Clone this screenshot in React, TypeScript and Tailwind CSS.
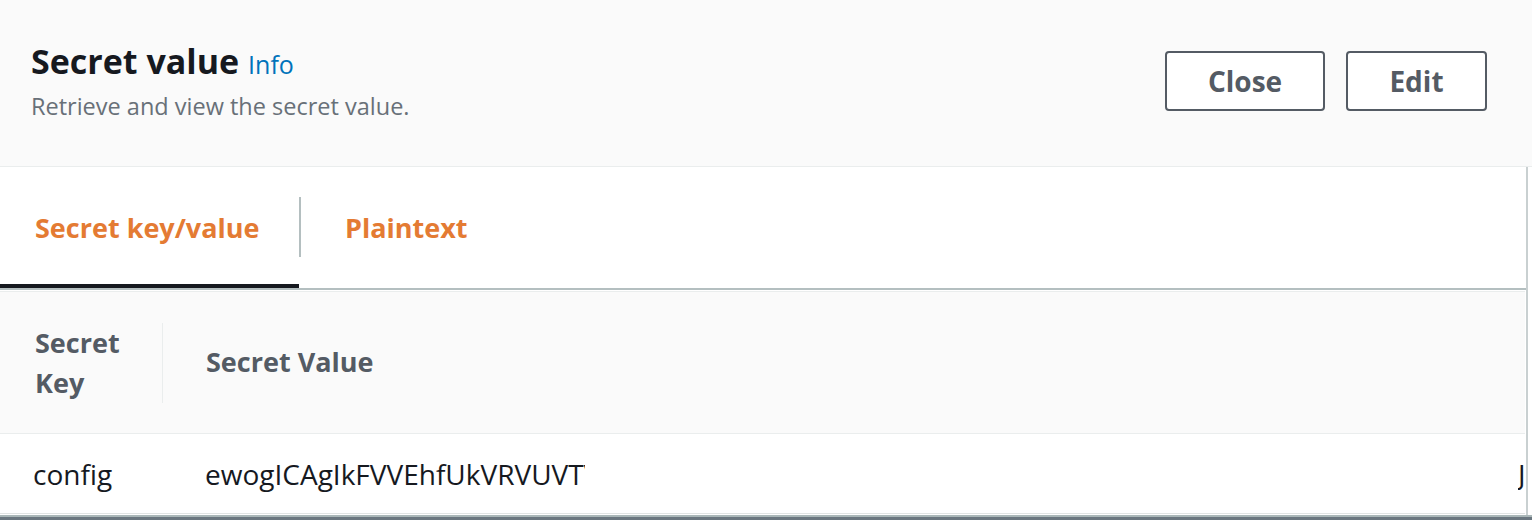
export default function App() {
  return (
    <div
      className="w-[1532px] h-[520px] overflow-hidden bg-white flex flex-col"
      style={{ fontFamily: '"Open Sans", "Liberation Sans", sans-serif' }}
    >
      {/* Header */}
      <div className="h-[167px] shrink-0 bg-[#fafafa] border-b border-[#eaeded] flex items-start justify-between pl-[31px] pr-[45px]">
        <div className="pt-[40px]">
          <div className="flex items-baseline gap-[9px] leading-[43px]">
            <h1 className="text-[34px] font-bold text-[#16191f]">Secret value</h1>
            <a className="text-[25px] text-[#0073bb]">Info</a>
          </div>
          <p className="mt-[6px] text-[23.5px] leading-[28px] text-[#687078]">
            Retrieve and view the secret value.
          </p>
        </div>
        <div className="pt-[51px] flex gap-[21px]">
          <button className="w-[160px] h-[60px] bg-white border-2 border-[#545b64] rounded-[4px] text-[28px] font-bold text-[#545b64]">
            Close
          </button>
          <button className="w-[141px] h-[60px] bg-white border-2 border-[#545b64] rounded-[4px] text-[28px] font-bold text-[#545b64]">
            Edit
          </button>
        </div>
      </div>

      {/* Body */}
      <div className="flex-1 flex flex-col mr-[4px] border-r-2 border-[#c9d0d1]">
        {/* Tabs */}
        <div className="h-[123px] shrink-0 flex items-stretch border-b-2 border-[#b4bfc0]">
          <div className="w-[299px] flex items-center pl-[35px] pt-[6px] border-b-4 border-[#16191f]">
            <span className="text-[27px] font-bold text-[#e47b33]">Secret key/value</span>
          </div>
          <div className="flex items-center">
            <div className="w-[2px] h-[60px] bg-[#b4bfc0] mt-[-2px]" />
          </div>
          <div className="flex items-center pl-[44px] pt-[2px]">
            <span className="text-[27px] font-bold text-[#e47b33]">Plaintext</span>
          </div>
        </div>

        {/* Table */}
        <div className="mt-[1px] flex-1 flex flex-col border-t border-[#eaeded] mr-[1px]">
          <div className="h-[142px] shrink-0 bg-[#fafafa] border-b border-[#eaeded] flex items-center text-[27px] font-bold text-[#545b64]">
            <div className="w-[163px] shrink-0 pl-[35px] pr-[20px] leading-[40px] border-r border-[#eaeded]">
              Secret Key
            </div>
            <div className="pl-[43px]">Secret Value</div>
          </div>
          <div className="h-[80px] shrink-0 flex items-center justify-between text-[28px] text-[#16191f] border-b border-[#e1e4e4]">
            <div className="flex items-center">
              <div className="w-[205px] shrink-0 pl-[33px]">config</div>
              <div className="w-[380px] overflow-hidden whitespace-nowrap">
                ewogICAgIkFVVEhfUkVRVUVTVF9JRCI6ICIxMjM0NTY3ODkwIiwKICAgICJBUElfS0VZIjog
              </div>
            </div>
            <div className="w-[7px] overflow-hidden whitespace-nowrap">J</div>
          </div>
        </div>
      </div>
      <div className="h-[2px] shrink-0 bg-[#aab7b8]" />
      <div className="h-[3px] shrink-0 bg-[#6b7780]" />
    </div>
  );
}
